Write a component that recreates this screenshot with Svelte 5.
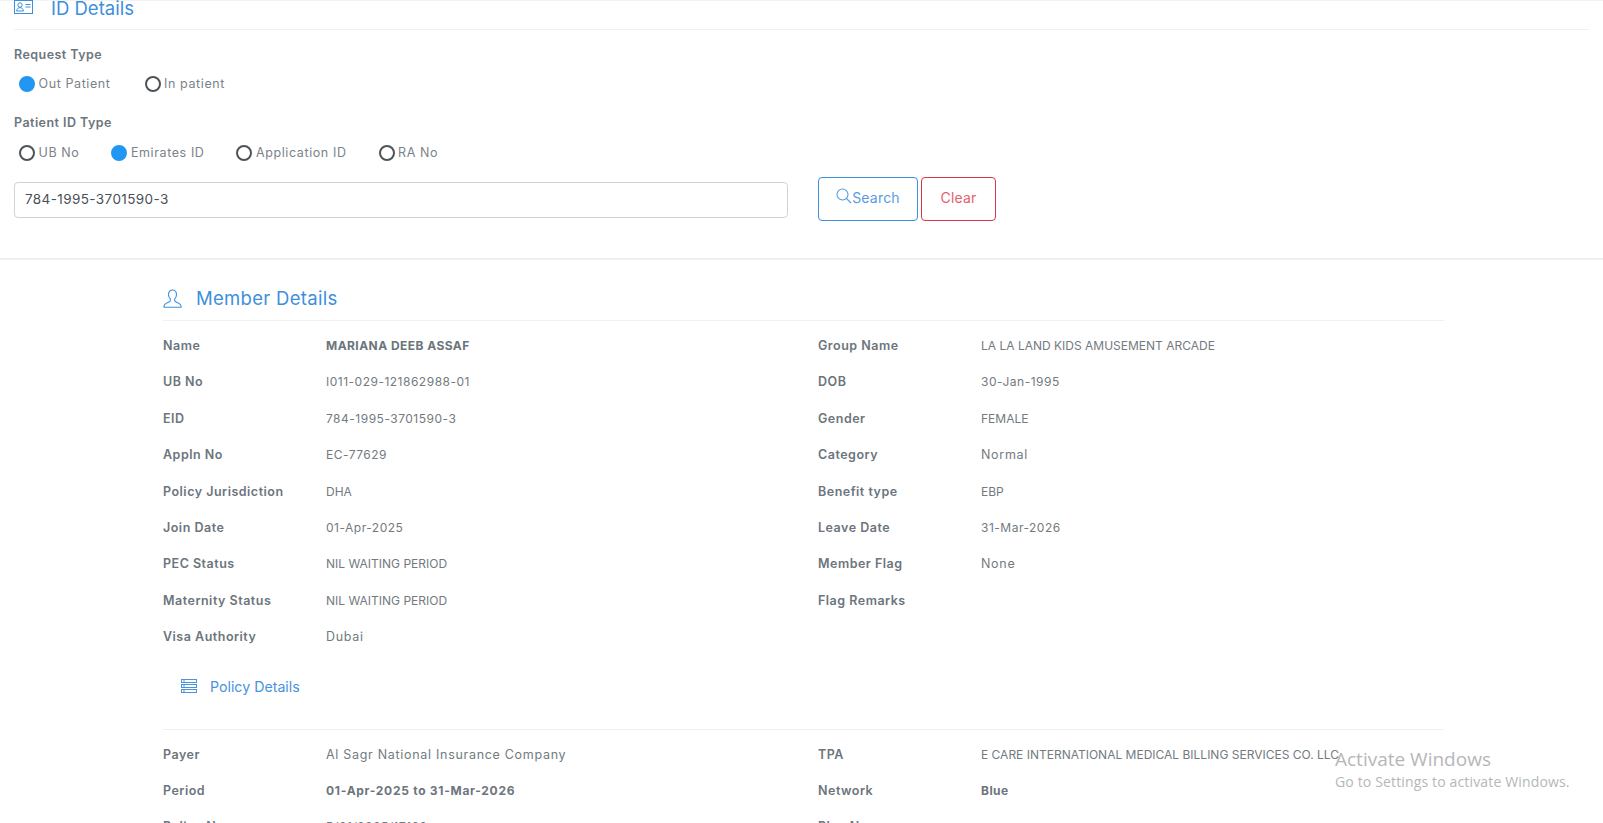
<script>
  const member = [
    ['Name', 'MARIANA DEEB ASSAF', 'b', 'Group Name', 'LA LA LAND KIDS AMUSEMENT ARCADE', ''],
    ['UB No', 'I011-029-121862988-01', 'num', 'DOB', '30-Jan-1995', 'num'],
    ['EID', '784-1995-3701590-3', 'num', 'Gender', 'FEMALE', ''],
    ['Appln No', 'EC-77629', 'num', 'Category', 'Normal', 'txt'],
    ['Policy Jurisdiction', 'DHA', '', 'Benefit type', 'EBP', ''],
    ['Join Date', '01-Apr-2025', 'num', 'Leave Date', '31-Mar-2026', 'num'],
    ['PEC Status', 'NIL WAITING PERIOD', '', 'Member Flag', 'None', 'txt'],
    ['Maternity Status', 'NIL WAITING PERIOD', '', 'Flag Remarks', '', ''],
    ['Visa Authority', 'Dubai', 'txt', '', '', '']
  ];
  const policy = [
    ['Payer', 'Al Sagr National Insurance Company', 'txt', 'TPA', 'E CARE INTERNATIONAL MEDICAL BILLING SERVICES CO. LLC', ''],
    ['Period', '01-Apr-2025 to 31-Mar-2026', 'b long', 'Network', 'Blue', 'b'],
    ['Policy No', 'P/01/2025/17199', 'num', 'Plan Name', '', '']
  ];
  const reqTypes = [['Out Patient', true], ['In patient', false]];
  const idTypes = [['UB No', false], ['Emirates ID', true], ['Application ID', false], ['RA No', false]];
</script>

<div class="page">
  <section class="id-card">
    <h2 class="head id-head">
      <svg width="20" height="15" viewBox="0 0 20 15" fill="none" stroke="#3d8fdc" stroke-width="1">
        <rect x="0.5" y="0.5" width="18" height="13" />
        <circle cx="6" cy="5" r="2.2" />
        <path d="M2.500 11c.5-2.500 2-3.400 3.500-3.400s3 .9 3.500 3.400z" />
        <path d="M11.500 4.500h5M11.500 7h5" />
      </svg>
      <span>ID Details</span>
    </h2>
    <div class="lbl first">Request Type</div>
    <div class="radios upper">
      {#each reqTypes as [t, on]}
        <span class="radio"><i class:on></i>{t}</span>
      {/each}
    </div>
    <div class="lbl second">Patient ID Type</div>
    <div class="radios lower">
      {#each idTypes as [t, on]}
        <span class="radio"><i class:on></i>{t}</span>
      {/each}
    </div>
    <div class="search-row">
      <input class="field" value="784-1995-3701590-3" />
      <button class="btn search">
        <svg width="16" height="16" viewBox="0 0 16 16" fill="none" stroke="#5b9be0" stroke-width="1.1">
          <circle cx="6.500" cy="6.500" r="5.500" />
          <path d="M10.500 10.500L15 15" />
        </svg>Search
      </button>
      <button class="btn clear">Clear</button>
    </div>
  </section>

  <section class="details">
    <h2 class="head member-head">
      <svg width="19" height="19" viewBox="0 0 19 19" fill="none" stroke="#3d8fdc" stroke-width="1.1">
        <path d="M9.500 1c-2.600 0-4 2-4 4.400 0 2 .9 3.600 1.800 4.500v1.800c0 .8-1 1.200-2.500 1.800C2.500 14.400 1 15.200 1 17.500v.7h17v-.7c0-2.300-1.500-3.100-3.800-4c-1.500-.6-2.500-1-2.500-1.800V9.900c.9-.9 1.800-2.500 1.800-4.500C13.500 3 12.100 1 9.500 1z" />
      </svg>
      <span>Member Details</span>
    </h2>
    <div class="rows">
      {#each member as [a, b, bc, c, d, dc]}
        <div class="row">
          <span class="k">{a}</span><span class="v {bc}">{b}</span>
          <span class="k">{c}</span><span class="v {dc}">{d}</span>
        </div>
      {/each}
    </div>
    <h3 class="policy-head">
      <svg width="16" height="14" viewBox="0 0 16 14" fill="none" stroke="#4a93dd" stroke-width="1">
        <rect x="0.500" y="0.500" width="15" height="3" />
        <rect x="0.500" y="5.500" width="15" height="3" />
        <rect x="0.500" y="10.500" width="15" height="3" />
        <path d="M3 .5v3M3 5.500v3M3 10.500v3" />
      </svg>
      <span>Policy Details</span>
    </h3>
    <div class="rows policy">
      {#each policy as [a, b, bc, c, d, dc]}
        <div class="row">
          <span class="k">{a}</span><span class="v {bc}">{b}</span>
          <span class="k">{c}</span><span class="v {dc}">{d}</span>
        </div>
      {/each}
    </div>
  </section>

  <div class="activate">
    <div class="a1">Activate Windows</div>
    <div class="a2">Go to Settings to activate Windows.</div>
  </div>
</div>

<style>
  :global(body) {
    margin: 0;
    background: #fff;
  }
  .page {
    height: 823px;
    overflow: hidden;
    position: relative;
    font-family: Inter, "Open Sans", sans-serif;
    color: #6c757d;
    font-size: 12.500px;
  }
  .id-card {
    padding: 0 14px;
    border-bottom: 2px solid #eeeff1;
    box-sizing: border-box;
    height: 260px;
    border-top: 1px solid #f3f3f3;
  }
  .head {
    display: flex;
    align-items: center;
    margin: 0;
    font-weight: 400;
    color: #3d8fdc;
    font-size: 18.500px;
    border-bottom: 1px solid #eef0f2;
  }
  .id-head {
    height: 29px;
    padding-bottom: 15px;
    box-sizing: border-box;
    gap: 17px;
  }
  .lbl {
    font-weight: 600;
    font-size: 12.500px;
    color: #6c757d;
    line-height: 18px;
    letter-spacing: .45px;
  }
  .lbl.first { margin-top: 16px; }
  .lbl.second { margin-top: 21px; }
  .radios {
    display: flex;
    padding-left: 5px;
    margin-top: 10.500px;
    height: 18px;
  }
  .radios.upper { gap: 34px; }
  .radios.lower { gap: 32px; margin-top: 12px; }
  .radio {
    display: flex;
    align-items: center;
    gap: 3.500px;
    color: #7b8288;
    line-height: 18px;
    letter-spacing: .6px;
  }
  .radio i {
    width: 16px;
    height: 16px;
    border: 2px solid #4e5358;
    border-radius: 50%;
    box-sizing: border-box;
    display: block;
  }
  .radio i.on {
    background: #2196f3;
    border-color: #2196f3;
  }
  .search-row {
    display: flex;
    align-items: center;
    margin-top: 15.700px;
  }
  .field {
    width: 774px;
    height: 36px;
    box-sizing: border-box;
    border: 1px solid #ced4da;
    border-radius: 4px;
    padding: 0 10px 2px;
    font: inherit;
    font-size: 13.500px;
    letter-spacing: .4px;
    color: #495057;
    outline: none;
    margin: 2px 30px 0 0;
  }
  .btn {
    height: 44px;
    box-sizing: border-box;
    background: #fff;
    border-radius: 4px;
    font: inherit;
    font-size: 14px;
    letter-spacing: .2px;
    display: flex;
    align-items: center;
    justify-content: center;
    padding: 0 0 3px;
  }
  .search {
    width: 100px;
    border: 1px solid #3d8fdc;
    color: #5b9be0;
    margin-right: 3px;
  }
  .search svg { margin-top: -3px; }
  .clear {
    width: 75px;
    border: 1px solid #dc3545;
    color: #e4606d;
  }
  .details {
    padding: 0 159px 0 163px;
  }
  .member-head {
    margin-top: 20px;
    height: 36px;
    padding-bottom: 4px;
    gap: 14px;
    letter-spacing: .3px;
  }
  .rows { margin-top: 7px; }
  .row {
    display: grid;
    grid-template-columns: 163px 492px 163px 1fr;
    height: 36.400px;
    line-height: 36.400px;
    white-space: nowrap;
  }
  .k {
    font-weight: 600;
    color: #6c757d;
    letter-spacing: .5px;
  }
  .v { color: #737a80; font-size: 12px; }
  .v.num { letter-spacing: .5px; }
  .v.txt { font-size: 12.500px; letter-spacing: .7px; }
  .v.b {
    font-weight: 700;
    color: #6c757d;
    letter-spacing: .45px;
  }
  .v.b.long { letter-spacing: .72px; }
  .policy-head {
    display: flex;
    align-items: center;
    gap: 13px;
    margin: 0;
    padding-left: 18px;
    height: 61px;
    font-weight: 400;
    font-size: 14.200px;
    color: #4a93dd;
  }
  .policy {
    margin-top: 12px;
    padding-top: 7px;
    border-top: 1px solid #eef0f2;
  }
  .activate {
    position: absolute;
    left: 1335px;
    top: 746px;
    font-family: "Open Sans", sans-serif;
    color: #b5b7b9;
    pointer-events: none;
  }
  .a1 { font-size: 19px; line-height: 26px; }
  .a2 { font-size: 14px; letter-spacing: .15px; line-height: 20px; }
</style>
